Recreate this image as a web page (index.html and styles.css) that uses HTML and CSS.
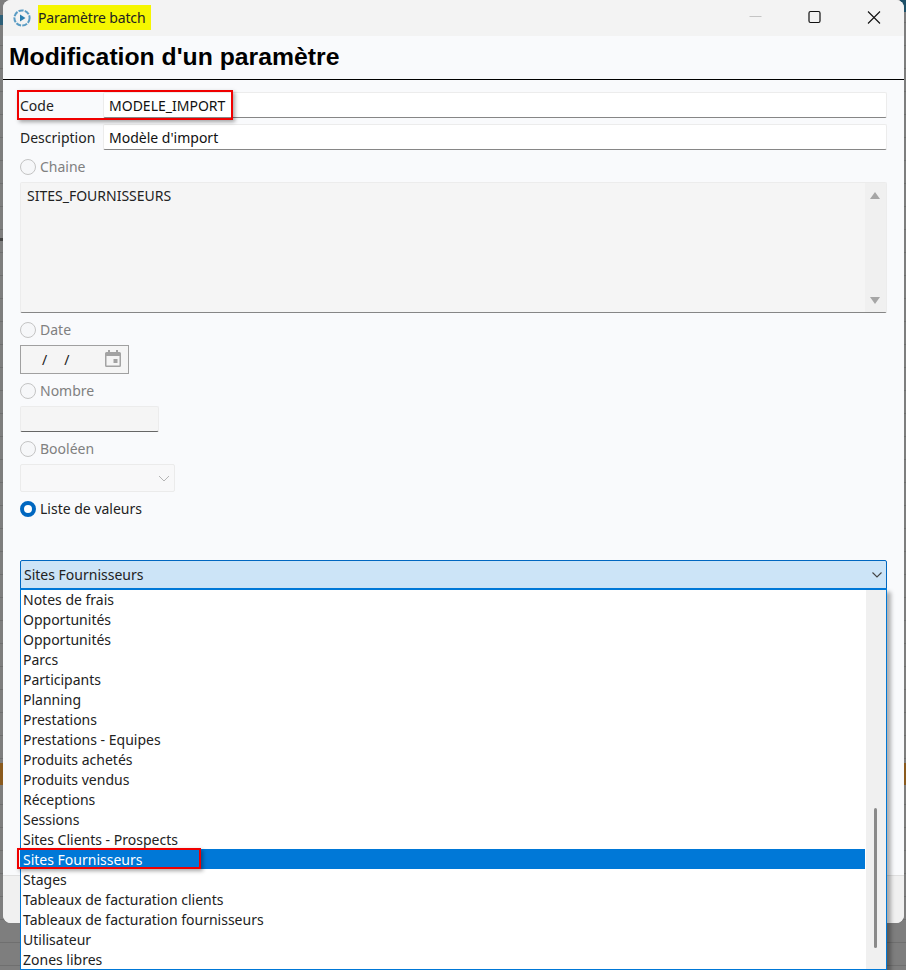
FILE: index.html
```html
<!DOCTYPE html>
<html lang="fr">
<head>
<meta charset="utf-8">
<title>Paramètre batch</title>
<link rel="stylesheet" href="styles.css">
</head>
<body>
<div class="backdrop">
  <span class="bg-mark bg-teal-left"></span>
  <span class="bg-mark bg-teal-right"></span>
  <span class="bg-mark bg-dark"></span>
  <span class="bg-mark bg-orange-left"></span>
  <span class="bg-mark bg-orange-right"></span>
</div>
<main class="dialog">
  <header class="titlebar">
    <svg class="app-icon" width="20" height="20" viewBox="0 0 20 20" aria-hidden="true">
      <circle cx="10" cy="10" r="7.6" fill="none" stroke="#5a9cc4" stroke-width="2" stroke-dasharray="5.2 1.2"/>
      <path d="M8 6.5v7l5.5-3.5z" fill="#2a7fb0"/>
    </svg>
    <span class="title-text">Paramètre batch</span>
    <div class="window-buttons">
      <svg class="win-btn" width="46" height="36" viewBox="0 0 46 36" aria-hidden="true"><path d="M17 16.5h12" stroke="#c4c4c4" fill="none"/></svg>
      <svg class="win-btn" width="46" height="36" viewBox="0 0 46 36" aria-hidden="true"><rect x="17.5" y="11.5" width="11" height="11" rx="1.5" fill="none" stroke="#111" stroke-width="1.2"/></svg>
      <svg class="win-btn" width="46" height="36" viewBox="0 0 46 36" aria-hidden="true"><path d="M17.5 11.5l12 12M29.5 11.5l-12 12" stroke="#111" stroke-width="1.1" fill="none"/></svg>
    </div>
  </header>
  <div class="heading-bar"><h1>Modification d'un paramètre</h1></div>
  <section class="form">
    <div class="field-row">
      <label class="field-label">Code</label>
      <div class="text-input">MODELE_IMPORT</div>
    </div>
    <div class="field-row row-description">
      <label class="field-label">Description</label>
      <div class="text-input">Modèle d'import</div>
    </div>

    <div class="radio-row row-chaine"><span class="radio"></span><span class="radio-label">Chaine</span></div>
    <div class="memo">
      <span class="memo-text">SITES_FOURNISSEURS</span>
      <div class="memo-scroll">
        <svg width="10" height="7" viewBox="0 0 10 7" aria-hidden="true"><path d="M5 0l5 7H0z" fill="#a6a6a6"/></svg>
        <svg width="10" height="7" viewBox="0 0 10 7" aria-hidden="true"><path d="M0 0h10L5 7z" fill="#a6a6a6"/></svg>
      </div>
    </div>

    <div class="radio-row row-date"><span class="radio"></span><span class="radio-label">Date</span></div>
    <div class="date-input">
      <span class="date-slashes"><span>/</span><span>/</span></span>
      <svg class="calendar" width="16" height="17" viewBox="0 0 16 17" aria-hidden="true">
        <path fill="#a3a3a3" d="M3 0h2v2h6V0h2v2h1.5A1.5 1.5 0 0 1 16 3.5v12a1.5 1.5 0 0 1-1.5 1.5h-13A1.5 1.5 0 0 1 0 15.5v-12A1.5 1.5 0 0 1 1.500 2H3zM1.500 6v9.500h13V6z"/>
        <rect x="8.500" y="9" width="4" height="4" fill="#a3a3a3"/>
      </svg>
    </div>

    <div class="radio-row row-nombre"><span class="radio"></span><span class="radio-label">Nombre</span></div>
    <div class="number-input"></div>

    <div class="radio-row row-booleen"><span class="radio"></span><span class="radio-label">Booléen</span></div>
    <div class="bool-select">
      <svg width="12" height="7" viewBox="0 0 12 7" aria-hidden="true"><path d="M1 1l5 5 5-5" fill="none" stroke="#b5b5b5"/></svg>
    </div>

    <div class="radio-row row-liste"><span class="radio radio-checked"></span><span class="radio-label label-active">Liste de valeurs</span></div>

    <div class="combo">
      <span>Sites Fournisseurs</span>
      <svg width="10" height="6" viewBox="0 0 10 6" aria-hidden="true"><path d="M.5.5L5 5 9.500.5" fill="none" stroke="#444" stroke-width="1.100"/></svg>
    </div>
  </section>
  <footer class="footer-band"></footer>

  <div class="dropdown">
    <ul class="options">
      <li>Notes de frais</li>
      <li>Opportunités</li>
      <li>Opportunités</li>
      <li>Parcs</li>
      <li>Participants</li>
      <li>Planning</li>
      <li>Prestations</li>
      <li>Prestations - Equipes</li>
      <li>Produits achetés</li>
      <li>Produits vendus</li>
      <li>Réceptions</li>
      <li>Sessions</li>
      <li>Sites Clients - Prospects</li>
      <li class="selected">Sites Fournisseurs</li>
      <li>Stages</li>
      <li>Tableaux de facturation clients</li>
      <li>Tableaux de facturation fournisseurs</li>
      <li>Utilisateur</li>
      <li>Zones libres</li>
    </ul>
    <div class="list-scroll"><div class="list-thumb"></div></div>
  </div>

  <div class="highlight hl-code"></div>
  <div class="highlight hl-site"></div>
</main>
</body>
</html>
```

FILE: styles.css
```css
* { box-sizing: border-box; }

html, body {
  margin: 0;
  height: 970px;
  overflow: hidden;
}

body {
  position: relative;
  background: #7e7e7e;
  font-family: "Noto Sans", "Open Sans", sans-serif;
  font-size: 14px;
  color: #1a1a1a;
}

.backdrop {
  position: absolute;
  inset: 0;
  background: repeating-linear-gradient(to bottom, #7e7e7e 0, #7e7e7e 22px, #6f6f6f 22px, #6f6f6f 23px);
}

.bg-mark { position: absolute; }
.bg-teal-left { left: 0; top: 15px; width: 3px; height: 10px; background: #2e5f78; }
.bg-teal-right { left: 900px; top: 0; width: 6px; height: 12px; background: #1d5068; }
.bg-dark { left: 0; top: 238px; width: 3px; height: 3px; background: #444; }
.bg-orange-left { left: 0; top: 763px; width: 3px; height: 22px; background: #8a5a1e; }
.bg-orange-right { left: 904px; top: 763px; width: 2px; height: 22px; background: #8a5a1e; }

.dialog {
  position: relative;
  margin-left: 3px;
  width: 901px;
  height: 923px;
  display: flex;
  flex-direction: column;
  background: #f9fafc;
  border-radius: 8px;
}

.titlebar {
  height: 36px;
  flex: none;
  display: flex;
  align-items: center;
  padding-left: 9px;
  background: #f3f3f3;
  border-radius: 8px 8px 0 0;
}

.app-icon { flex: none; }

.title-text {
  margin-left: 6px;
  height: 25px;
  line-height: 26px;
  width: 113px;
  letter-spacing: -0.15px;
  background: #f6f600;
  color: #222;
  margin-top: -1px;
}

.window-buttons {
  margin-left: auto;
  display: flex;
  padding-right: 1px;
}

.win-btn { display: block; width: 59px; }

.heading-bar {
  height: 44px;
  flex: none;
  border-bottom: 1px solid #000;
  padding: 5px 0 0 6px;
}

h1 {
  margin: 0;
  font-family: "Liberation Sans", Arial, sans-serif;
  font-size: 24.75px;
  line-height: 32px;
  font-weight: 700;
  color: #000;
}

.form {
  flex: 1;
  padding: 12px 17px 0;
}

.field-row {
  display: flex;
  height: 26px;
  align-items: center;
}

.row-description { margin-top: 6px; }

.field-label {
  width: 83px;
  flex: none;
  color: #222;
  line-height: 28px;
  height: 26px;
}

.text-input {
  flex: 1;
  height: 26px;
  padding: 0 5px;
  line-height: 26px;
  background: #fff;
  border: 1px solid #ececec;
  border-bottom-color: #868686;
  border-radius: 2px;
  color: #111;
}

.radio-row {
  display: flex;
  align-items: center;
  height: 20px;
  gap: 4px;
}

.row-chaine { margin-top: 7px; }
.row-date { margin-top: 7px; }
.row-nombre { margin-top: 7px; }
.row-booleen { margin-top: 7px; }
.row-liste { margin-top: 7px; }

.radio {
  width: 16px;
  height: 16px;
  flex: none;
  border: 1px solid #c4c4c4;
  border-radius: 50%;
  background: #f6f7f9;
}

.radio-checked {
  border: 4.500px solid #0067c0;
  background: #fff;
}

.radio-label { color: #808080; line-height: 20px; }
.label-active { color: #222; }

.memo {
  position: relative;
  margin-top: 5px;
  height: 131px;
  background: #f5f5f5;
  border: 1px solid #ececec;
  border-bottom-color: #868686;
  border-radius: 2px;
  padding: 3px 0 0 6px;
  line-height: 20px;
  color: #222;
  display: flex;
  justify-content: space-between;
}

.memo-scroll {
  width: 21px;
  margin-top: -3px;
  padding: 9px 2px 8px 0;
  background: #f0f0f0;
  display: flex;
  flex-direction: column;
  justify-content: space-between;
  align-items: center;
}

.date-input {
  margin-top: 5px;
  width: 109px;
  height: 29px;
  background: #f5f5f5;
  border: 1px solid #a0a0a0;
  display: flex;
  align-items: center;
  justify-content: space-between;
  padding: 0 7px 3px 21px;
}

.date-slashes {
  display: flex;
  gap: 17px;
  color: #1a1a1a;
  line-height: 26px;
  padding-top: 3px;
}

.number-input {
  margin-top: 5px;
  width: 139px;
  height: 26px;
  background: #f5f5f5;
  border: 1px solid #ececec;
  border-bottom-color: #666;
  border-radius: 2px;
}

.bool-select {
  margin-top: 5px;
  width: 155px;
  height: 28px;
  background: #f8f8f9;
  border: 1px solid #ebebeb;
  border-radius: 2px;
  display: flex;
  align-items: center;
  justify-content: flex-end;
  padding-right: 4px;
}

.combo {
  margin-top: 41px;
  width: 867px;
  height: 29px;
  background: #cce4f7;
  border: 1px solid #0067c0;
  border-radius: 2px 2px 0 0;
  display: flex;
  align-items: center;
  justify-content: space-between;
  padding: 0 4px 0 3px;
  color: #222;
}

.footer-band {
  height: 48px;
  flex: none;
  background: #f0f0f0;
  border-top: 1px solid #dfdfdf;
  border-radius: 0 0 8px 8px;
}

.dropdown {
  position: absolute;
  left: 17px;
  top: 588px;
  width: 867px;
  height: 382px;
  display: flex;
  background: #fff;
  border: 1px solid #0078d7;
  border-top-width: 2px;
  box-shadow: 4px 4px 4px rgba(0, 0, 0, 0.3);
}

.options {
  list-style: none;
  margin: -1px 0 0;
  padding: 0;
  width: 844px;
  flex: none;
}

.options li {
  height: 20px;
  line-height: 22px;
  padding-left: 2px;
  color: #222;
}

.options li.selected {
  background: #0078d7;
  color: #fff;
}

.list-scroll {
  position: relative;
  flex: 1;
  margin-left: 1px;
  background: #f0f0f0;
}

.list-thumb {
  position: absolute;
  left: 8px;
  top: 218px;
  width: 3px;
  height: 140px;
  border-radius: 2px;
  background: #8a8a8a;
}

.highlight {
  position: absolute;
  border: 2px solid #f00000;
  box-shadow: 2px 2px 4px rgba(0, 0, 0, 0.35);
}

.hl-code { left: 14px; top: 90px; width: 216px; height: 30px; }
.hl-site { left: 14px; top: 848px; width: 184px; height: 21px; }
```
